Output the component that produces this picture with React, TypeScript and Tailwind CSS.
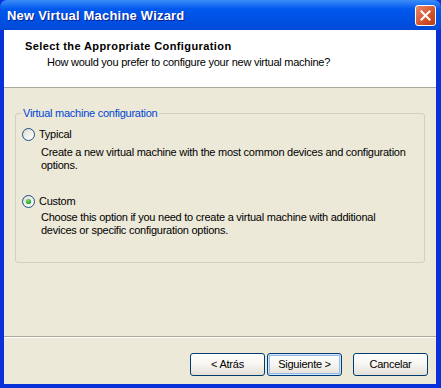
export default function App() {
  const font = { fontFamily: '"Liberation Sans", Arial, sans-serif' };
  return (
    <div className="w-[441px] h-[388px] flex flex-col bg-[#0831D9] text-[11px] leading-[13px] tracking-[-0.25px] text-black" style={font}>
      {/* Title bar */}
      <div className="h-[30px] shrink-0 flex items-center justify-between pl-[7px] pr-[5px] rounded-t-[7px] bg-gradient-to-b from-[#3B8CF7] via-[#0058EE] via-30% to-[#0049D7]">
        <span className="text-white font-bold text-[13px] tracking-[0.2px] [text-shadow:1px_1px_0_#0A1E8C]">
          New Virtual Machine Wizard
        </span>
        <button className="w-[21px] h-[21px] rounded-[3px] border border-white bg-gradient-to-br from-[#E8886A] via-[#D85A34] to-[#B9390F] flex items-center justify-center">
          <svg width="11" height="11" viewBox="0 0 11 11">
            <path d="M1.5 1.5 L9.5 9.5 M9.5 1.5 L1.5 9.5" stroke="white" strokeWidth="2" strokeLinecap="square" />
          </svg>
        </button>
      </div>

      {/* Client area */}
      <div className="flex-1 flex flex-col ml-[4px] mr-[5px] mb-[4px] bg-[#ECE9D8]">
        {/* Header */}
        <div className="h-[57px] shrink-0 bg-white pl-[21px] pt-[10px]">
          <div className="font-bold tracking-[0.4px]">Select the Appropriate Configuration</div>
          <div className="pl-[22px] pt-[3px]">How would you prefer to configure your new virtual machine?</div>
        </div>
        <div className="h-px shrink-0 bg-[#ACA899]" />

        {/* Body */}
        <div className="h-[248px] shrink-0 px-[11px] pt-[19px]">
          <fieldset className="h-[156px] border border-[#D0D0BF] rounded-[3px] pl-[6px] pr-[6px]">
            <legend className="ml-[-1px] px-[2px] text-[#0046D5]">Virtual machine configuration</legend>
            <div className="pt-[8px]">
              <label className="flex items-center gap-[4px]">
                <Radio checked={false} />
                <span>Typical</span>
              </label>
              <p className="w-[368px] pl-[19px] pt-[5px] box-content">
                Create a new virtual machine with the most common devices and configuration options.
              </p>
            </div>
            <div className="pt-[23px]">
              <label className="flex items-center gap-[4px]">
                <Radio checked={true} />
                <span>Custom</span>
              </label>
              <p className="w-[368px] pl-[19px] pt-[3px] box-content">
                Choose this option if you need to create a virtual machine with additional devices or specific configuration options.
              </p>
            </div>
          </fieldset>
        </div>
        <div className="h-px shrink-0 bg-[#ACA899]" />
        <div className="h-px shrink-0 bg-white" />

        {/* Footer */}
        <div className="flex-1 flex justify-end items-start pt-[15px] pr-[8px]">
          <XpButton label="< Atrás" />
          <XpButton label="Siguiente >" primary className="ml-[2px]" />
          <XpButton label="Cancelar" className="ml-[11px]" />
        </div>
      </div>
    </div>
  );
}

function Radio({ checked }: { checked: boolean }) {
  return (
    <svg width="13" height="13" viewBox="0 0 13 13" className="shrink-0">
      <defs>
        <linearGradient id={checked ? "rfa" : "rfb"} x1="0" y1="0" x2="1" y2="1">
          <stop offset="0" stopColor="#DCD9CF" />
          <stop offset="0.6" stopColor="#F4F3EE" />
          <stop offset="1" stopColor="#FFFFFF" />
        </linearGradient>
        <radialGradient id="dot" cx="0.4" cy="0.35" r="0.7">
          <stop offset="0" stopColor="#6FE06F" />
          <stop offset="1" stopColor="#1F9A1F" />
        </radialGradient>
      </defs>
      <circle cx="6.5" cy="6.5" r="6" fill={`url(#${checked ? "rfa" : "rfb"})`} stroke="#1C5180" strokeWidth="1" />
      {checked && <circle cx="6.5" cy="6.5" r="2.6" fill="url(#dot)" />}
    </svg>
  );
}

function XpButton({ label, primary, className = "" }: { label: string; primary?: boolean; className?: string }) {
  return (
    <button
      className={`w-[75px] h-[23px] rounded-[3px] border border-[#003C74] bg-gradient-to-b from-white via-[#F6F5F1] to-[#E3E0D6] text-[11px] leading-[13px] text-black ${
        primary ? "shadow-[inset_0_0_0_1px_#CEE7FF,inset_0_0_0_2px_#98B8EA]" : ""
      } ${className}`}
    >
      {label}
    </button>
  );
}
